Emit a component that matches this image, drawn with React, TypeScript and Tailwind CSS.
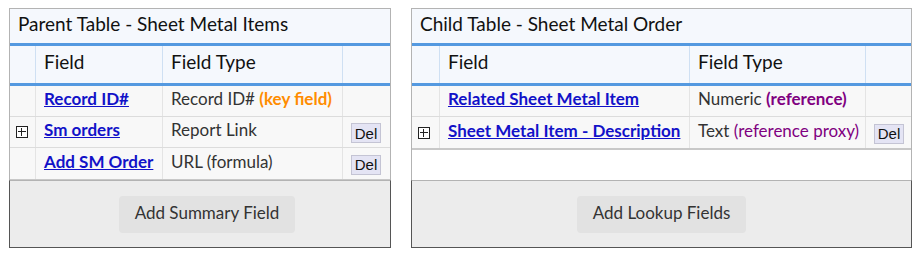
import React from "react";

type Row = {
  expand?: boolean;
  name: string;
  type: React.ReactNode;
  del?: boolean;
};

type Panel = {
  title: string;
  cols: string;
  width: string;
  rows: Row[];
  action: string;
  actionShift?: string;
};

const panels: Panel[] = [
  {
    title: "Parent Table - Sheet Metal Items",
    cols: "grid-cols-[26px_127px_180px_1fr]",
    width: "w-[382px]",
    action: "Add Summary Field",
    actionShift: "ml-[14px]",
    rows: [
      {
        name: "Record ID#",
        type: (
          <span>
            Record ID# <span className="font-bold text-[#ff8c00]">(key field)</span>
          </span>
        ),
      },
      { expand: true, name: "Sm orders", type: "Report Link", del: true },
      { name: "Add SM Order", type: "URL (formula)", del: true },
    ],
  },
  {
    title: "Child Table - Sheet Metal Order",
    cols: "grid-cols-[28px_250px_176px_1fr]",
    width: "w-[501px]",
    action: "Add Lookup Fields",
    rows: [
      {
        name: "Related Sheet Metal Item",
        type: (
          <span>
            Numeric <span className="font-bold text-[#800080]">(reference)</span>
          </span>
        ),
      },
      {
        expand: true,
        name: "Sheet Metal Item - Description",
        type: (
          <span>
            Text <span className="text-[#800080]">(reference proxy)</span>
          </span>
        ),
        del: true,
      },
    ],
  },
];

function ExpandBox() {
  return (
    <span className="relative block h-[12px] w-[12px] border border-[#222] bg-white">
      <span className="absolute left-[1px] right-[1px] top-[4px] h-px bg-[#222]" />
      <span className="absolute bottom-[1px] top-[1px] left-[4px] w-px bg-[#222]" />
    </span>
  );
}

function FieldPanel({ panel }: { panel: Panel }) {
  return (
    <div className={`${panel.width} flex flex-col`}>
      <div className="h-[172px] border-x border-t border-[#b3b3b3] bg-white">
        <div className="flex h-[34px] items-center bg-[#f5f8fd] pb-[3px] pl-2 text-[19px] text-[#111]">
          {panel.title}
        </div>
        <div className="border-y-[3px] border-[#5499e0]">
          <div className={`grid ${panel.cols} h-[37px] bg-[#f5f8fd] text-[19px] text-[#111]`}>
            <div className="border-r border-[#cfe0f3]" />
            <div className="flex items-center border-r border-[#cfe0f3] pb-[4px] pl-2">Field</div>
            <div className="flex items-center border-r border-[#cfe0f3] pb-[4px] pl-2">Field Type</div>
            <div />
          </div>
        </div>
        <div className="border-b-2 border-[#c8c8c8]">
          {panel.rows.map((row, i) => (
            <div
              key={row.name}
              className={`grid ${panel.cols} h-[31px] bg-[#f8f8f8] text-[17px] ${
                i < panel.rows.length - 1 ? "border-b border-[#dcdcdc]" : ""
              }`}
            >
              <div className="flex items-center border-r border-[#e4e4e4] pl-[6px]">
                {row.expand && <ExpandBox />}
              </div>
              <div className="flex items-center whitespace-nowrap border-r border-[#e4e4e4] pb-[4px] pl-2">
                <a href="#" className="font-bold text-[#1212c8] underline">
                  {row.name}
                </a>
              </div>
              <div className="flex items-center whitespace-nowrap border-r border-[#e4e4e4] pb-[4px] pl-2 text-[#333]">
                {row.type}
              </div>
              <div className="flex items-center pl-2 pt-[2px]">
                {row.del && (
                  <button
                    type="button"
                    className="h-[20px] w-[30px] border border-[#c4c4d4] bg-[#e4e4f4] font-['Liberation_Sans',Arial,sans-serif] text-[15px] leading-none text-[#111]"
                  >
                    Del
                  </button>
                )}
              </div>
            </div>
          ))}
        </div>
      </div>
      <div className="flex h-[68px] items-center justify-center border-x border-b border-t border-x-[#555] border-b-[#555] border-t-[#b3b3b3] bg-[#ececec]">
        <button
          type="button"
          className={`h-[37px] rounded-[4px] bg-[#e2e2e2] px-[16px] pb-[2px] text-[17px] text-[#333] ${panel.actionShift ?? ""}`}
        >
          {panel.action}
        </button>
      </div>
    </div>
  );
}

export default function App() {
  return (
    <div className="flex min-h-[263px] w-[923px] gap-5 bg-white pl-[9px] pt-2 font-['Lato',sans-serif]">
      {panels.map((p) => (
        <FieldPanel key={p.title} panel={p} />
      ))}
    </div>
  );
}
